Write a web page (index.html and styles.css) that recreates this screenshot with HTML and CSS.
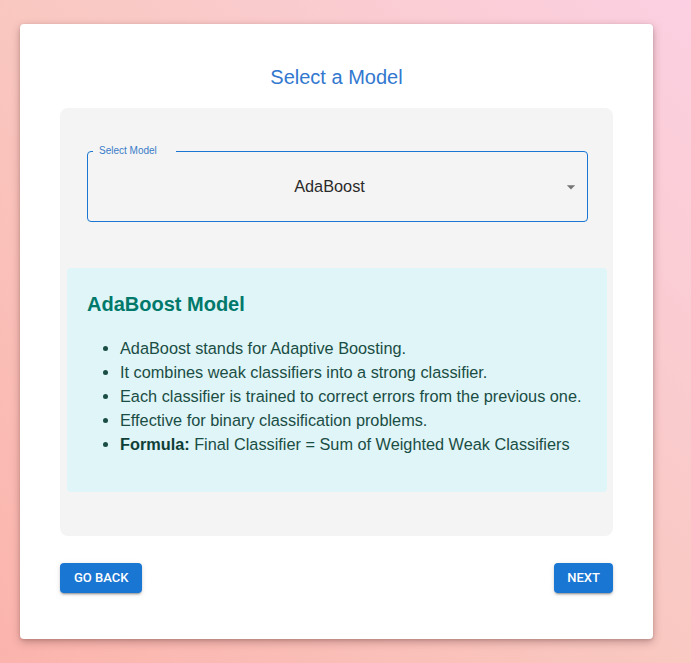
FILE: index.html
```html
<!DOCTYPE html>
<html lang="en">
<head>
<meta charset="utf-8">
<title>Select a Model</title>
<link rel="stylesheet" href="styles.css">
</head>
<body>
<div class="card">
  <h2 class="title">Select a Model</h2>
  <div class="panel">
    <div class="select">
      <span class="select-label">Select Model</span>
      <span class="select-value">AdaBoost</span>
      <svg class="select-arrow" viewBox="0 0 24 24" width="20" height="20" aria-hidden="true"><path d="M7 10l5 5 5-5z" fill="#757575"/></svg>
    </div>
    <div class="info">
      <h3 class="info-title">AdaBoost Model</h3>
      <ul class="info-list">
        <li>AdaBoost stands for Adaptive Boosting.</li>
        <li>It combines weak classifiers into a strong classifier.</li>
        <li>Each classifier is trained to correct errors from the previous one.</li>
        <li>Effective for binary classification problems.</li>
        <li><strong>Formula:</strong> Final Classifier = Sum of Weighted Weak Classifiers</li>
      </ul>
    </div>
  </div>
  <div class="actions">
    <button class="btn">Go Back</button>
    <button class="btn btn-next">Next</button>
  </div>
</div>
</body>
</html>
```

FILE: styles.css
```css
html, body {
  margin: 0;
  padding: 0;
}
body {
  min-height: 663px;
  font-family: "Liberation Sans", Arial, sans-serif;
  background: linear-gradient(45deg, #fbb4ad 0%, #f9c8c1 50%, #fcd0e2 100%);
  overflow: hidden;
}
.card {
  margin: 24px 0 0 20px;
  width: 633px;
  box-sizing: border-box;
  background: #fff;
  border-radius: 4px;
  padding: 40px 40px 46px;
  box-shadow: 0 3px 8px rgba(90, 40, 40, 0.35), 0 1px 3px rgba(0,0,0,0.12);
}
.title {
  margin: 0 0 18px;
  font-size: 20px;
  line-height: 26px;
  font-weight: normal;
  text-align: center;
  color: #3278cf;
}
.panel {
  background: #f4f4f4;
  border-radius: 8px;
  padding: 43px 6px 44px 7px;
  margin-bottom: 27px;
}
.select {
  position: relative;
  height: 71px;
  box-sizing: border-box;
  margin: 0 19px 46px 20px;
  padding-right: 16px;
  border: 1px solid #1976d2;
  border-radius: 4px;
  display: flex;
  align-items: center;
  justify-content: center;
}
.select-label {
  position: absolute;
  top: -7px;
  left: 5px;
  padding: 0 19px 0 6px;
  background: #f4f4f4;
  font-size: 10px;
  line-height: 12px;
  color: #3a7cc9;
}
.select-value {
  font-size: 16.3px;
  color: #2a2a2a;
}
.select-arrow {
  position: absolute;
  right: 6px;
  top: 25px;
}
.info {
  background: #dff5f8;
  border-radius: 4px;
  padding: 24px 20px 36px;
}
.info-title {
  margin: 0;
  font-size: 20px;
  line-height: 24px;
  font-weight: bold;
  color: #00796b;
}
.info-list {
  margin: 20px 0 0;
  padding-left: 33px;
  font-size: 16.3px;
  line-height: 24px;
  color: #1a4d44;
}
.info-list strong {
  color: #0f3f36;
}
.actions {
  display: flex;
  justify-content: space-between;
}
.btn {
  font-family: Roboto, "Liberation Sans", sans-serif;
  font-weight: 500;
  font-size: 13px;
  line-height: 30px;
  height: 30px;
  padding: 0 14px;
  text-transform: uppercase;
  color: #fff;
  background: #1976d2;
  border: none;
  border-radius: 4px;
  box-shadow: 0 3px 1px -2px rgba(0,0,0,0.2), 0 2px 2px 0 rgba(0,0,0,0.14), 0 1px 5px 0 rgba(0,0,0,0.12);
}
.btn-next {
  padding: 0 13px;
}
```
